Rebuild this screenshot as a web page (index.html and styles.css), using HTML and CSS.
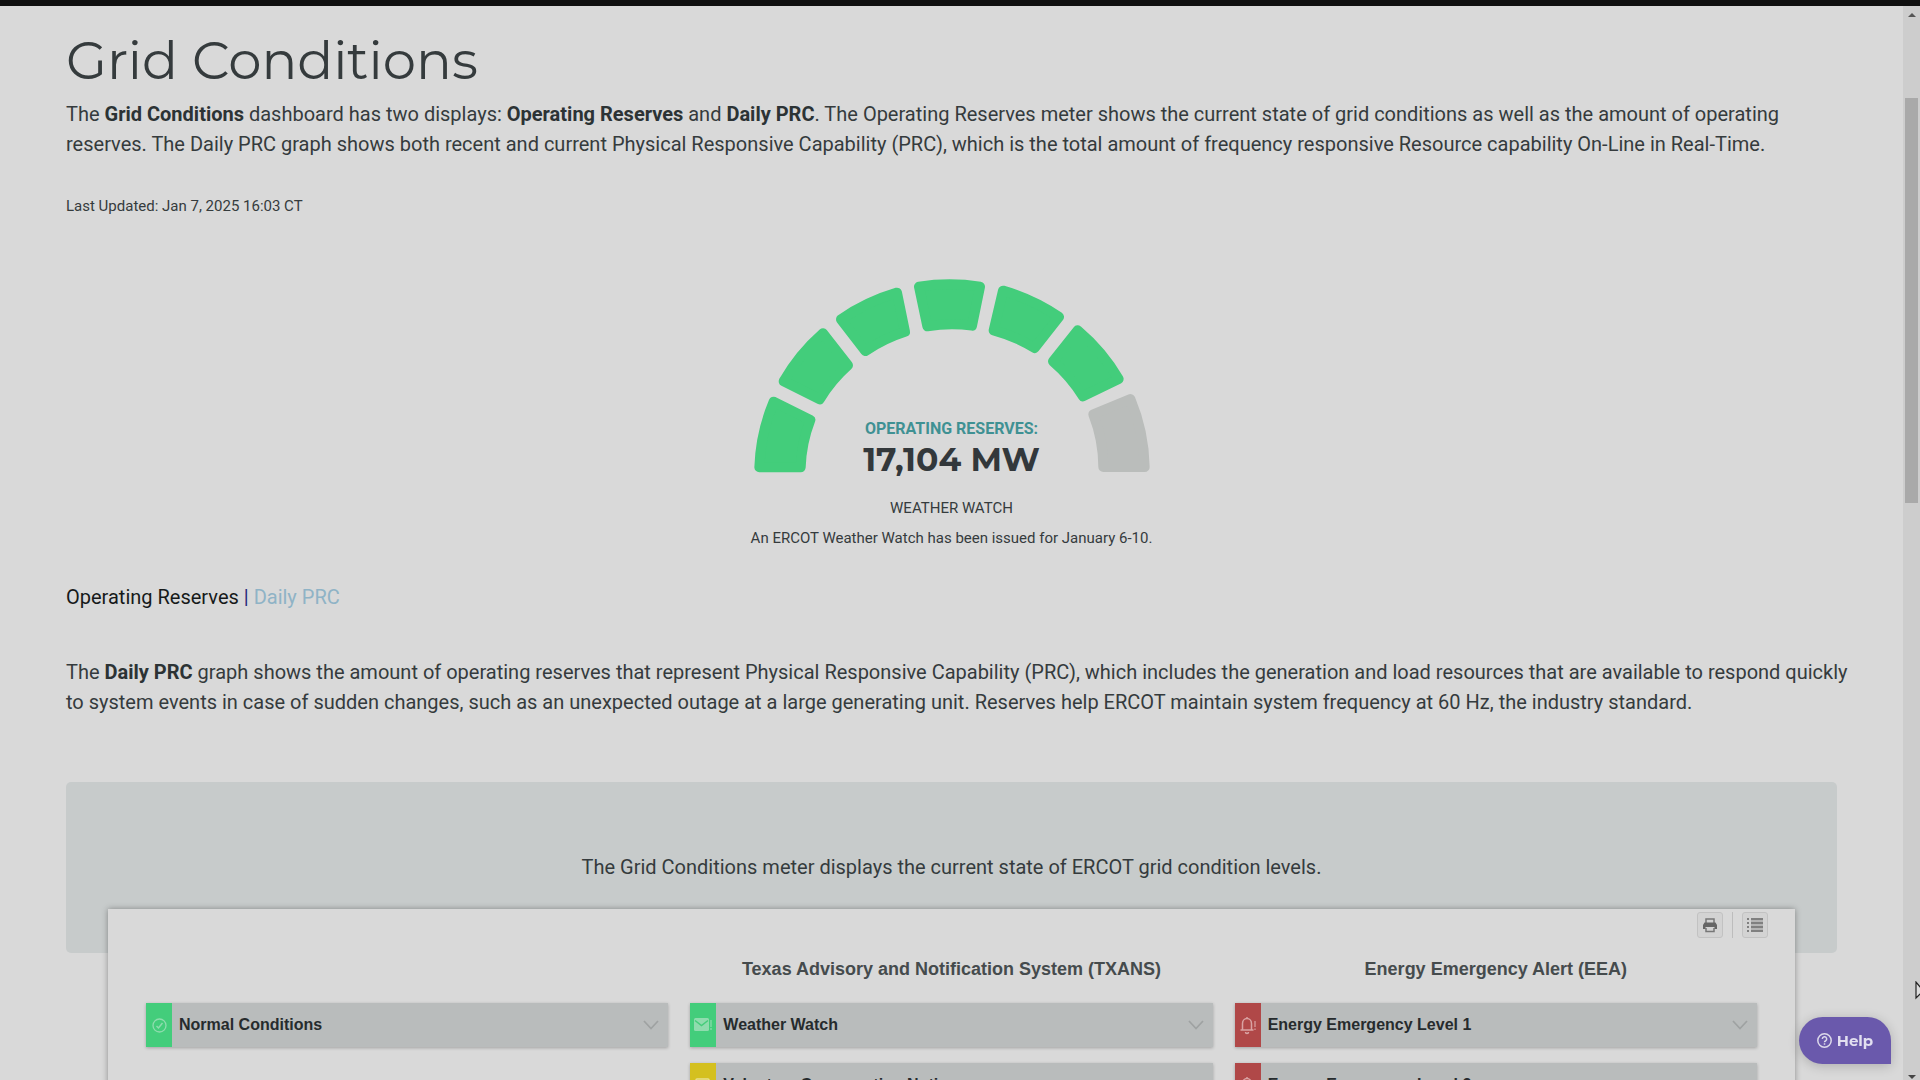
FILE: index.html
```html
<!DOCTYPE html>
<html lang="en">
<head>
<meta charset="utf-8">
<title>Grid Conditions</title>
<link rel="stylesheet" href="styles.css">
</head>
<body>
<svg class="sprite" aria-hidden="true">
  <symbol id="chevron" viewBox="0 0 16 10"><path d="M1 1l7 7.500l7-7.500" fill="none" stroke="#9fa2a2" stroke-width="1.700"/></symbol>
  <symbol id="bell" viewBox="0 0 18 20"><path d="M1.500 15h13M3.500 15V8.500a4.500 5 0 0 1 9 0V15M8 3.500V2M6.500 17a1.500 1.500 0 0 0 3 0" fill="none" stroke="#d9a3a3" stroke-width="1.500"/><path d="M16 6v6M16 13.500v1.500" stroke="#d9a3a3" stroke-width="1.200"/></symbol>
  <symbol id="mail" viewBox="0 0 18 14"><rect x="0" y="0" width="15" height="13" rx="1.500" fill="#8fdcae"/><path d="M1 2.500l6.500 5l6.500-5" fill="none" stroke="#45cd7b" stroke-width="1.500"/><path d="M17 2v7M17 10v2" stroke="#8fdcae" stroke-width="1.200"/></symbol>
</svg>
<div class="topbar"></div>
<div class="window">
  <main class="page">
    <h1 class="title">Grid Conditions</h1>
    <p class="copy">The <strong>Grid Conditions</strong> dashboard has two displays: <strong>Operating Reserves</strong> and <strong>Daily PRC</strong>. The Operating Reserves meter shows the current state of grid conditions as well as the amount of operating reserves. The Daily PRC graph shows both recent and current Physical Responsive Capability (PRC), which is the total amount of frequency responsive Resource capability On-Line in Real-Time.</p>
    <p class="updated">Last Updated: Jan 7, 2025 16:03 CT</p>

    <section class="meter">
      <div class="gauge">
        <svg class="dial" viewBox="66 51 1200 594" aria-hidden="true">
          <g class="segment">
            <path d="M88 622A578 565 0 0 1 131 425L241 480A455 445 0 0 0 212 622Z"/>
            <path d="M161 364A578 565 0 0 1 279 220L354 316A455 445 0 0 0 269 418Z"/>
            <path d="M333 178A578 565 0 0 1 501 98L525 215A455 445 0 0 0 406 273Z"/>
            <path d="M567 80A578 565 0 0 1 750 80L726 197A455 445 0 0 0 592 199Z"/>
            <path d="M819 92A578 565 0 0 1 987 171L914 264A455 445 0 0 0 791 211Z"/>
            <path d="M1043 211A578 565 0 0 1 1166 357L1059 409A455 445 0 0 0 969 304Z"/>
          </g>
          <path class="segment segment-off" d="M1201 417A578 565 0 0 1 1244 621L1120 621A455 445 0 0 0 1090 463Z"/>
        </svg>
        <div class="reading">
          <span class="reading-label">OPERATING RESERVES:</span>
          <span class="reading-value">17,104 MW</span>
        </div>
      </div>
      <p class="state">WEATHER WATCH</p>
      <p class="state-note">An ERCOT Weather Watch has been issued for January 6-10.</p>
    </section>

    <nav class="views"><a class="view" href="#reserves">Operating Reserves</a> <span class="bar">|</span> <a class="view view-other" href="#prc">Daily PRC</a></nav>

    <p class="copy copy-wide">The <strong>Daily PRC</strong> graph shows the amount of operating reserves that represent Physical Responsive Capability (PRC), which includes the generation and load resources that are available to respond quickly to system events in case of sudden changes, such as an unexpected outage at a large generating unit. Reserves help ERCOT maintain system frequency at 60 Hz, the industry standard.</p>

    <section class="levels">
      <div class="banner"><p class="banner-text">The Grid Conditions meter displays the current state of ERCOT grid condition levels.</p></div>
      <div class="card">
        <div class="tools">
          <button class="tool" type="button" aria-label="Print"><svg width="16" height="16" viewBox="0 0 16 16"><path d="M4 6V2h8v4M4 11v3.500h8V11" fill="none" stroke="#777" stroke-width="1.500"/><path d="M2.500 5.500h11L15 8v4h-2.500v-2h-9v2H1V8z" fill="#666"/></svg></button>
          <span class="tool-rule"></span>
          <button class="tool" type="button" aria-label="List"><svg width="16" height="16" viewBox="0 0 16 16"><path d="M4 1h12v14H4z" fill="#b4b4b4"/><path d="M0 2h2M0 6h2M0 10h2M0 14h2M4 2h12M4 6h12M4 10h12M4 14h12" stroke="#808080" stroke-width="2"/></svg></button>
        </div>
        <div class="columns">
          <div class="column">
            <h2 class="column-title"></h2>
            <button class="level" type="button"><span class="flag flag-green"><svg width="15" height="15" viewBox="0 0 15 15" fill="none" stroke="#8fdcae"><circle cx="7.500" cy="7.500" r="6.500" stroke-width="1.300"/><path d="M4.500 8l2 2l4-5" stroke-width="1.500"/></svg></span><span class="level-name">Normal Conditions</span><svg class="chevron"><use href="#chevron"/></svg></button>
          </div>
          <div class="column">
            <h2 class="column-title">Texas Advisory and Notification System (TXANS)</h2>
            <button class="level" type="button"><span class="flag flag-green"><svg width="18" height="14"><use href="#mail"/></svg></span><span class="level-name">Weather Watch</span><svg class="chevron"><use href="#chevron"/></svg></button>
            <button class="level" type="button"><span class="flag flag-yellow"><svg width="16" height="18" viewBox="0 0 16 18"><rect x="1" y="3" width="13" height="13" rx="1" fill="none" stroke="#e8df94" stroke-width="1.500"/></svg></span><span class="level-name">Voluntary Conservation Notice</span><svg class="chevron"><use href="#chevron"/></svg></button>
          </div>
          <div class="column">
            <h2 class="column-title">Energy Emergency Alert (EEA)</h2>
            <button class="level" type="button"><span class="flag flag-red"><svg width="18" height="20"><use href="#bell"/></svg></span><span class="level-name">Energy Emergency Level 1</span><svg class="chevron"><use href="#chevron"/></svg></button>
            <button class="level" type="button"><span class="flag flag-red"><svg width="18" height="20"><use href="#bell"/></svg></span><span class="level-name">Energy Emergency Level 2</span><svg class="chevron"><use href="#chevron"/></svg></button>
          </div>
        </div>
      </div>
    </section>
  </main>
  <div class="scrollbar" aria-hidden="true">
    <span class="arrow arrow-up"></span>
    <span class="thumb"></span>
    <span class="arrow arrow-down"></span>
  </div>
</div>
<button class="help" type="button"><svg width="15" height="15" viewBox="0 0 15 15" fill="none" stroke="#dcd9ea" stroke-width="1.500"><circle cx="7.500" cy="7.500" r="6.700"/><path d="M5.300 6a2.200 2.200 0 1 1 3.200 2c-.8.400-1 .7-1 1.300M7.500 10.300v1.500"/></svg>Help</button>
<svg class="cursor" width="12" height="20" viewBox="0 0 12 20" aria-hidden="true"><path d="M1 1v16l4-4h6z" fill="#ddd" stroke="#222" stroke-width="1.200"/></svg>
</body>
</html>
```

FILE: styles.css
```css
* { box-sizing: border-box; }
body {
  margin: 0;
  height: 100vh;
  display: flex;
  flex-direction: column;
  overflow: hidden;
  background: #d9d9d9;
  color: #353b3d;
  font-family: Roboto, sans-serif;
}
p, h1, h2 { margin: 0; }
button { border: 0; padding: 0; font: inherit; color: inherit; }
.sprite { display: none; }
.topbar { flex: none; height: 6px; background: #101010; }
.window { flex: 1; min-height: 0; display: flex; }
.page { flex: 1; min-width: 0; overflow: hidden; padding: 18px 66px 0; }

.title { margin-bottom: 3px; font: 400 53px/72px Montserrat, Inter, sans-serif; }
.copy { font-size: 20px; line-height: 30px; }
.copy-wide { margin-right: -24px; }
.copy strong { font-weight: 700; color: #2c3335; }
.updated { margin-top: 35px; font-size: 15px; line-height: 24px; }

.meter { display: flex; flex-direction: column; align-items: center; margin-top: 59px; }
.gauge { display: grid; justify-items: center; align-items: end; }
.dial { grid-area: 1 / 1; width: 400px; height: 198px; }
.segment { fill: #43cd7b; stroke: #43cd7b; stroke-width: 30; stroke-linejoin: round; }
.segment-off { fill: #babdbb; stroke: #babdbb; }
.reading { grid-area: 1 / 1; display: flex; flex-direction: column; align-items: center; gap: 4px; }
.reading-label { font-size: 16px; line-height: 20px; font-weight: 700; color: #3f9193; }
.reading-value { font: 700 33px/32px Montserrat, Inter, sans-serif; color: #33383b; }
.state { margin-top: 21px; font-size: 15px; line-height: 24px; }
.state-note { margin-top: 6px; font-size: 15px; line-height: 24px; }

.views { margin: 32px 0 45px; font-size: 20px; line-height: 30px; }
.view { color: #16191a; text-decoration: none; }
.view-other { color: #8fb3c6; }
.bar { color: #24247a; }

.levels { margin-top: 65px; }
.banner { height: 171px; padding-top: 70px; border-radius: 5px; background: #c7cbcb; text-align: center; }
.banner-text { font-size: 20px; line-height: 30px; }
.card {
  position: relative;
  margin: -44px 42px 0;
  padding: 3px 38px 40px;
  background: #d9d9d9;
  box-shadow: 0 0 6px rgba(0, 0, 0, .35);
  font-family: "Liberation Sans", Arial, sans-serif;
}
.tools { display: flex; justify-content: flex-end; align-items: center; gap: 9px; margin-right: -11px; }
.tool { width: 26px; height: 26px; display: grid; place-items: center; border: 1px solid #c2c2c2; border-radius: 3px; background: #d3d3d3; }
.tool-rule { width: 1px; height: 26px; background: #bdbdbd; }
.columns { display: grid; grid-template-columns: repeat(3, 1fr); gap: 22px; margin-top: 19px; }
.column { display: flex; flex-direction: column; gap: 16px; }
.column-title { height: 30px; font-size: 18px; line-height: 24px; text-align: center; color: #454b4d; }
.level { display: flex; align-items: center; height: 44px; padding-right: 9px; background: #b9bcbc; box-shadow: 0 1px 3px rgba(0, 0, 0, .25); text-align: left; }
.flag { width: 26px; height: 44px; display: grid; place-items: center; }
.flag-green { background: #43cd7b; }
.flag-yellow { background: #d4c01f; }
.flag-red { background: #b04848; }
.level-name { flex: 1; padding-left: 7px; font-size: 16px; line-height: 20px; font-weight: 700; color: #262b2d; }
.chevron { width: 16px; height: 10px; }

.scrollbar { flex: none; width: 17px; display: flex; flex-direction: column; align-items: center; background: #cdcdcd; padding: 7px 0 1px; }
.arrow { border: 4px solid transparent; }
.arrow-up { border-top: 0; border-bottom-color: #555; }
.arrow-down { margin-top: auto; border-bottom: 0; border-top-color: #444; }
.thumb { width: 13px; height: 38%; margin-top: 81px; background: #a9a9a9; }

.help {
  position: fixed; right: 29px; bottom: 16px;
  display: flex; align-items: center; justify-content: center; gap: 5px;
  width: 92px; height: 47px;
  border-radius: 24px 24px 0 24px;
  background: #6a59ac; color: #e2dff0;
  box-shadow: 0 2px 12px rgba(0, 0, 0, .2);
  font: 700 15px/20px Montserrat, Inter, sans-serif;
}
.cursor { position: fixed; right: -7px; bottom: 79px; }
```
